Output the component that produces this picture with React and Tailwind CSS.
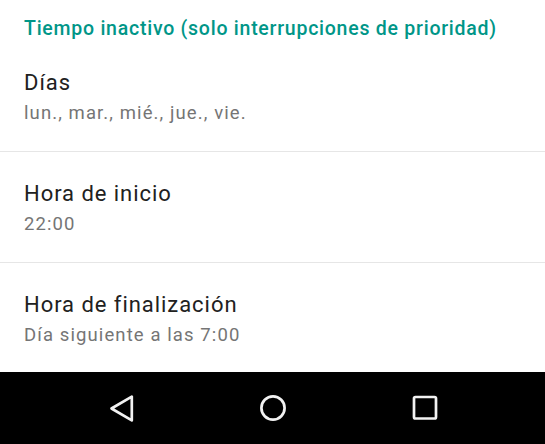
import React from 'react';

const items = [
  { title: 'Días', summary: 'lun., mar., mié., jue., vie.' },
  { title: 'Hora de inicio', summary: '22:00' },
  { title: 'Hora de finalización', summary: 'Día siguiente a las 7:00' },
];

const BackIcon = () => (
  <svg width="48" height="48" viewBox="0 0 48 48" fill="none">
    <path
      d="M14.5 24.5 L34.8 12.6 L34.8 36.4 Z"
      stroke="#f2f2f2"
      strokeWidth="2.7"
      strokeLinejoin="round"
    />
  </svg>
);

const HomeIcon = () => (
  <svg width="48" height="48" viewBox="0 0 48 48" fill="none">
    <circle cx="24" cy="24" r="11.6" stroke="#f2f2f2" strokeWidth="2.7" />
  </svg>
);

const RecentsIcon = () => (
  <svg width="48" height="48" viewBox="0 0 48 48" fill="none">
    <rect x="13" y="13" width="22" height="21.5" rx="1.5" stroke="#f2f2f2" strokeWidth="2.7" />
  </svg>
);

export default function App() {
  return (
    <div className="flex h-[444px] w-[545px] flex-col overflow-hidden bg-white font-['Roboto',sans-serif]">
      <div className="h-[41px] pl-6 pt-[17px]">
        <h2 className="whitespace-nowrap text-[19.5px] font-medium leading-[24px] tracking-[0.75px] text-[#009688]">
          Tiempo inactivo (solo interrupciones de prioridad)
        </h2>
      </div>

      <div className="flex flex-1 flex-col">
        {items.map((item, i) => (
          <div
            key={item.title}
            className={`px-6 pt-[28px] ${
              i < items.length - 1 ? 'h-[111px] border-b border-[#e6e6e6]' : 'flex-1'
            }`}
          >
            <div className="text-[22px] leading-[28px] tracking-[0.95px] text-[#212121]">{item.title}</div>
            <div className="mt-[2px] text-[18.5px] leading-[28px] tracking-[1.1px] text-[#757575]">
              {item.summary}
            </div>
          </div>
        ))}
      </div>

      <nav className="flex h-[72px] items-center justify-center gap-[104px] bg-black">
        <BackIcon />
        <HomeIcon />
        <RecentsIcon />
      </nav>
    </div>
  );
}
